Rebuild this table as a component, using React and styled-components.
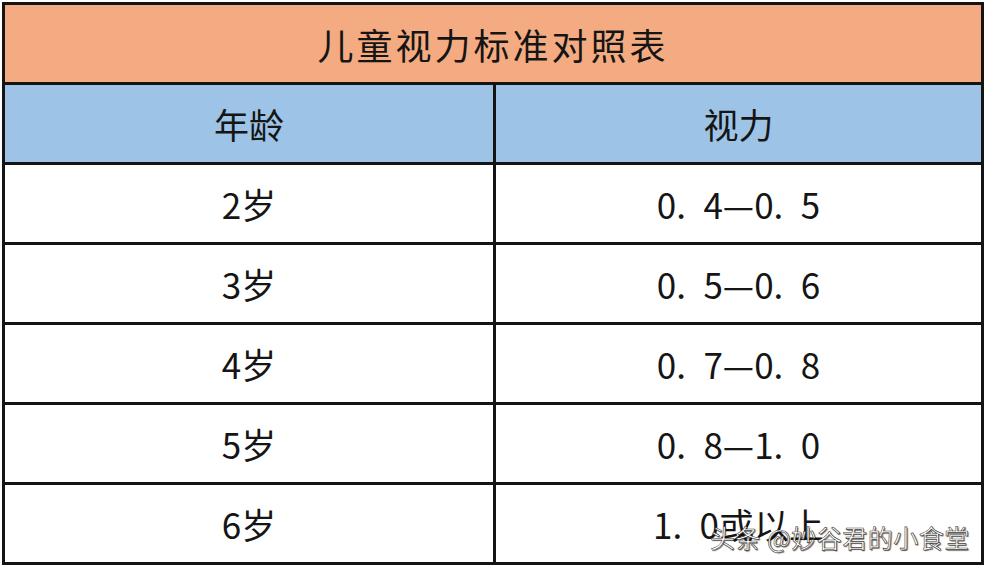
import React from "react";
import styled, { createGlobalStyle } from "styled-components";

const Global = createGlobalStyle`
  html, body { margin: 0; padding: 0; background: #ffffff; }
  body { font-family: "Noto Sans CJK SC", "Noto Sans", sans-serif; }
`;

const Page = styled.div`
  padding: 2px 0 0 2px;
  width: 986px;
  height: 566px;
  box-sizing: border-box;
  position: relative;
  overflow: hidden;
`;

const Table = styled.div`
  width: 982px;
  box-sizing: border-box;
  background: #141414;
  padding: 3px;
  display: grid;
  grid-template-columns: 488px 1fr;
  grid-auto-rows: 77px;
  gap: 3px;
`;

const Cell = styled.div`
  background: ${(p) => p.$bg || "#ffffff"};
  grid-column: ${(p) => (p.$span ? "1 / span 2" : "auto")};
  display: flex;
  align-items: center;
  justify-content: center;
  color: #151515;
  font-family: "Noto Sans CJK SC", "Noto Sans", sans-serif;
  font-size: ${(p) => p.$size || 35}px;
  letter-spacing: ${(p) => p.$ls || 0}px;
  box-sizing: border-box;
  white-space: pre;
`;

const Watermark = styled.div`
  position: absolute;
  left: 710px;
  top: 519px;
  font-family: "Noto Sans CJK SC", sans-serif;
  font-size: 25px;
  color: #ffffff;
  letter-spacing: 0.5px;
  -webkit-text-stroke: 0.6px rgba(40, 40, 40, 0.9);
  text-shadow: 1px 1px 1px rgba(0, 0, 0, 0.6);
`;

const rows = [
  ["2岁", "0.\u20024—0.\u20025"],
  ["3岁", "0.\u20025—0.\u20026"],
  ["4岁", "0.\u20027—0.\u20028"],
  ["5岁", "0.\u20028—1.\u20020"],
  ["6岁", "1.\u20020或以上"],
];

export default function App() {
  return (
    <>
      <Global />
      <Page>
        <Table>
          <Cell $span $bg="#F5AB81" $size={36} $ls={3}>
            儿童视力标准对照表
          </Cell>
          <Cell $bg="#9DC3E6" $size={35}>年龄</Cell>
          <Cell $bg="#9DC3E6" $size={35}>视力</Cell>
          {rows.map(([a, v]) => (
            <React.Fragment key={a}>
              <Cell>{a}</Cell>
              <Cell $size={35}>{v}</Cell>
            </React.Fragment>
          ))}
        </Table>
        <Watermark>头条 @妙谷君的小食堂</Watermark>
      </Page>
    </>
  );
}
